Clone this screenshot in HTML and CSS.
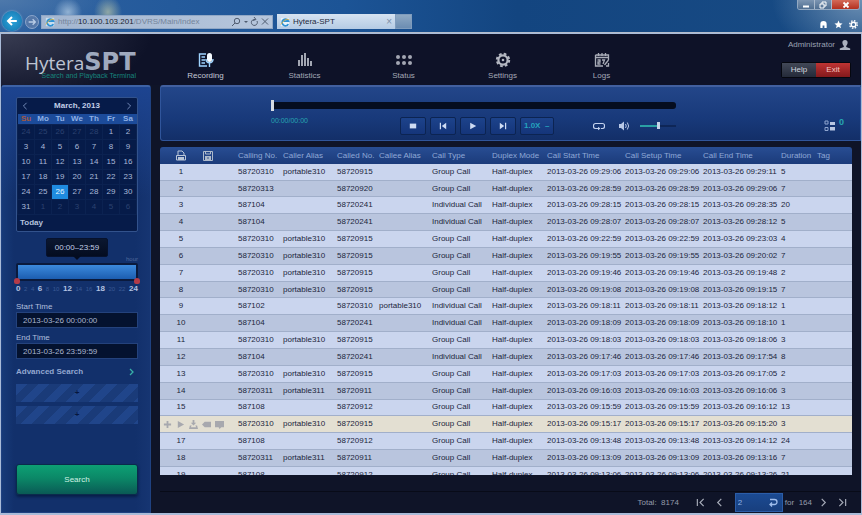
FILE: index.html
```html
<!DOCTYPE html>
<html lang="en">
<head>
<meta charset="utf-8">
<title>Hytera-SPT</title>
<link rel="stylesheet" href="styles.css">
</head>
<body>
<div class="window">
  <div class="chrome">
    <button class="back" aria-label="Back"><svg viewBox="0 0 20 20" width="20" height="20"><path d="M10 5 5 10l5 5M5.500 10H16" fill="none" stroke="#fff" stroke-width="2.500"/></svg></button>
    <button class="forward" aria-label="Forward"><svg viewBox="0 0 12 12" width="10" height="10"><path d="M7 2l4 4-4 4M1 6h9" fill="none" stroke="#b9cde6" stroke-width="2"/></svg></button>
    <div class="address">
      <svg class="ie" viewBox="0 0 12 12"><rect x="1" y="1" width="10" height="10" fill="#c8dff0"/><path d="M10 8.500a4 4 0 1 1 .2-3.500H4" fill="none" stroke="#2f92d4" stroke-width="2"/><path d="M1 9Q6 1 11 3" fill="none" stroke="#e2b33c"/></svg>
      <span class="url">http://<b>10.100.103.201</b>/DVRS/Main/Index</span>
      <svg class="address-tools" viewBox="0 0 38 10" width="38" height="10"><g fill="none" stroke="#4f5c70"><circle cx="6" cy="4" r="2.700"/><path d="M4 6 1 9"/><path d="M24 2.500a3 3 0 1 0 2 1.500M23 0l2 2.500-3 1"/><path d="m31 1.500 6 6M37 1.500l-6 6"/></g><path d="M13 4h4l-2 2z" fill="#4f5c70"/></svg>
    </div>
    <div class="tab">
      <svg class="ie" viewBox="0 0 12 12"><rect x="1" y="1" width="10" height="10" fill="#e8f3fb"/><path d="M10 8.500a4 4 0 1 1 .2-3.500H4" fill="none" stroke="#2f92d4" stroke-width="2"/><path d="M1 9Q6 1 11 3" fill="none" stroke="#e2b33c"/></svg>
      <span>Hytera-SPT</span>
      <button class="tab-close" aria-label="Close tab">×</button>
    </div>
    <button class="tab-new" aria-label="New tab"></button>
    <div class="window-side">
      <div class="window-buttons">
        <button aria-label="Minimize"><svg viewBox="0 0 8 8" width="8" height="8"><path d="M1 5.500h6" stroke="#fff" stroke-width="2"/></svg></button>
        <button aria-label="Restore"><svg viewBox="0 0 8 8" width="8" height="8"><path d="M3 3V1h4v4H5M1 3h4v4H1z" fill="none" stroke="#fff"/></svg></button>
        <button class="window-close" aria-label="Close"><svg viewBox="0 0 8 8" width="8" height="8"><path d="m1.500 1.500 5 5M6.500 1.500l-5 5" stroke="#fff" stroke-width="1.800"/></svg></button>
      </div>
      <div class="window-tools">
        <svg viewBox="0 0 10 10" width="9" height="9"><path d="M1.500 9V4.500a3.500 3.500 0 0 1 7 0V9H6V6H4v3z" fill="#fff"/></svg>
        <svg viewBox="0 0 10 10" width="9" height="9"><path d="m5 .5 1.300 3.100 3.200.2L7 6l.8 3.300L5 7.500 2.200 9.300 3 6 .5 3.800l3.200-.2z" fill="#fff"/></svg>
        <svg viewBox="0 0 10 10" width="9" height="9"><circle cx="5" cy="5" r="2.600" fill="none" stroke="#fff" stroke-width="1.600"/><circle cx="5" cy="5" r="4.200" fill="none" stroke="#fff" stroke-width="1.500" stroke-dasharray="1.700 1.600"/></svg>
      </div>
    </div>
  </div>

  <div class="app">
    <header class="topbar">
      <div class="logo">
        <div class="logo-name"><span>Hytera</span><b>SPT</b></div>
        <div class="logo-sub">Search and Playback Terminal</div>
      </div>
      <nav class="nav">
        <a href="#" class="active"><svg viewBox="0 0 16 16"><g fill="none" stroke="#9fd4ff" stroke-width="1.400"><path d="M8 2H1.500v12H9M3.500 5H7M3.500 8H7M3.500 11H7"/><path d="M8 7c0 5 7 5 7 0M11.500 11v4"/></g><rect x="9" y="1" width="5" height="9" rx="2.500" fill="#f4faff"/></svg>Recording</a>
        <a href="#"><svg viewBox="0 0 16 16"><path d="M1 8h2v6H1zM4 3h2v11H4zM7 1h2v13H7zM10 6h2v8h-2zM13 9h2v5h-2z" fill="#a3a7b3"/></svg>Statistics</a>
        <a href="#"><svg viewBox="0 0 16 16"><g fill="#a3a7b3"><circle cx="2" cy="5" r="2"/><circle cx="8" cy="5" r="2"/><circle cx="14" cy="5" r="2"/><circle cx="2" cy="11" r="2"/><circle cx="8" cy="11" r="2"/><circle cx="14" cy="11" r="2"/></g></svg>Status</a>
        <a href="#"><svg viewBox="0 0 16 16"><circle cx="8" cy="8" r="4.600" fill="none" stroke="#b4b8c2" stroke-width="2.200"/><circle cx="8" cy="8" r="6.200" fill="none" stroke="#b4b8c2" stroke-width="2" stroke-dasharray="2.700 2.170"/><circle cx="8" cy="8" r="1.300" fill="#b4b8c2"/></svg>Settings</a>
        <a href="#"><svg viewBox="0 0 16 16"><g fill="none" stroke="#a9adb8" stroke-width="1.300"><path d="M1.500 3h13v5M1.500 3v11H9M1.500 5.500h13M4.500 1v3M8 1v3M11.500 1v3M14.500 11v3H12"/><path d="M3.500 8H6v2H4v2h2.500M8 8h2.500L9 12"/><path d="m14.500 8-4 5"/></g></svg>Logs</a>
      </nav>
      <div class="account">
        <div class="user">Administrator <svg viewBox="0 0 12 12" width="12" height="12"><path d="M6 1c2 0 2.800 1.400 2.600 3C8.400 5.600 7.500 6.500 7.200 7v1l4 1.500V11H.8V9.500l4-1.500V7C4.500 6.500 3.600 5.600 3.400 4 3.200 2.400 4 1 6 1z" fill="#aab0be"/></svg></div>
        <div class="account-buttons"><button class="help">Help</button><button class="exit">Exit</button></div>
      </div>
    </header>

    <div class="body">
      <aside class="sidebar">
        <div class="calendar">
          <div class="cal-head"><button aria-label="Previous month"><svg viewBox="0 0 6 10" width="6" height="8"><path d="M5 1 1 5l4 4" fill="none" stroke="#8ea6d4"/></svg></button><b>March, 2013</b><button aria-label="Next month"><svg viewBox="0 0 6 10" width="6" height="8"><path d="m1 1 4 4-4 4" fill="none" stroke="#8ea6d4"/></svg></button></div>
          <table class="days">
            <thead><tr><th class="sunday">Su</th><th>Mo</th><th>Tu</th><th>We</th><th>Th</th><th>Fr</th><th>Sa</th></tr></thead>
            <tbody>
              <tr><td class="off">24</td><td class="off">25</td><td class="off">26</td><td class="off">27</td><td class="off">28</td><td>1</td><td>2</td></tr>
              <tr><td>3</td><td>4</td><td>5</td><td>6</td><td>7</td><td>8</td><td>9</td></tr>
              <tr><td>10</td><td>11</td><td>12</td><td>13</td><td>14</td><td>15</td><td>16</td></tr>
              <tr><td>17</td><td>18</td><td>19</td><td>20</td><td>21</td><td>22</td><td>23</td></tr>
              <tr><td>24</td><td>25</td><td class="selected">26</td><td>27</td><td>28</td><td>29</td><td>30</td></tr>
              <tr><td>31</td><td class="off">1</td><td class="off">2</td><td class="off">3</td><td class="off">4</td><td class="off">5</td><td class="off">6</td></tr>
            </tbody>
          </table>
          <button class="today">Today</button>
        </div>
        <div class="range-tip">00:00–23:59</div>
        <div class="range-unit">hour</div>
        <div class="range-bar">
          <input type="range" min="0" max="24" value="0" aria-label="From hour">
          <input type="range" min="0" max="24" value="24" aria-label="To hour">
        </div>
        <div class="hours"><b>0</b><i>2</i><i>4</i><b>6</b><i>8</i><i>10</i><b>12</b><i>14</i><i>16</i><b>18</b><i>20</i><i>22</i><b>24</b></div>
        <label class="field">Start Time<input type="text" value="2013-03-26 00:00:00"></label>
        <label class="field">End Time<input type="text" value="2013-03-26 23:59:59"></label>
        <button class="advanced"><span>Advanced Search</span><svg viewBox="0 0 6 8" width="6" height="8"><path d="m1 1 3 3-3 3" fill="none" stroke="#38b0a8" stroke-width="1.300"/></svg></button>
        <button class="slot" aria-label="Add condition">+</button>
        <button class="slot" aria-label="Add condition">+</button>
        <button class="search">Search</button>
      </aside>

      <main class="main">
        <section class="player">
          <input class="seek" type="range" min="0" max="100" value="0" aria-label="Playback position">
          <div class="controls">
            <span class="elapsed">00:00/00:00</span>
            <div class="buttons">
              <button aria-label="Stop"><svg viewBox="0 0 10 10" width="8" height="8"><path d="M1 2h8v6H1z" fill="#cfdcf3"/></svg></button>
              <button aria-label="Previous"><svg viewBox="0 0 10 10" width="8" height="8"><path d="M1 1h1.500v8H1zM9 1v8L3.500 5z" fill="#cfdcf3"/></svg></button>
              <button aria-label="Play"><svg viewBox="0 0 10 10" width="8" height="8"><path d="M1.500 1 9 5l-7.500 4z" fill="#cfdcf3"/></svg></button>
              <button aria-label="Next"><svg viewBox="0 0 10 10" width="8" height="8"><path d="M7.500 1H9v8H7.500zM1 1v8l5.500-4z" fill="#cfdcf3"/></svg></button>
              <select aria-label="Speed"><option>1.0X &nbsp;–</option></select>
            </div>
            <button class="plain loop" aria-label="Repeat"><svg viewBox="0 0 12 10" width="12" height="10"><path d="M4 2.500H2.500a2 2 0 0 0-2 2v1a2 2 0 0 0 2 2H5M8 7.500h1.500a2 2 0 0 0 2-2v-1a2 2 0 0 0-2-2H4" fill="none" stroke="#c3d2ee" stroke-width="1.200"/><path d="M5 5.700v3.600L7.500 7.500z" fill="#c3d2ee"/></svg></button>
            <button class="plain" aria-label="Mute"><svg viewBox="0 0 12 10" width="12" height="10"><path d="M1 3h2l3-2.500v9L3 7H1z" fill="#b7c7e6"/><path d="M7.500 3q1.500 2 0 4M9.300 1.500q2.700 3.500 0 7" fill="none" stroke="#b7c7e6"/></svg></button>
            <input class="volume" type="range" min="0" max="100" value="50" aria-label="Volume">
            <button class="plain queue" aria-label="Play list"><svg viewBox="0 0 12 12" width="12" height="12"><path d="M1 1h3v3H1zM1 7.500h3v3H1z" fill="none" stroke="#8fa5cf"/><path d="M6 2h5v3H6zM6 7h5v3.500H6z" fill="#b8c6e2"/></svg><sup>0</sup></button>
          </div>
        </section>

        <div class="grid">
          <table class="calls">
            <colgroup><col class="c-no"><col class="c-mark"><col class="c-calling"><col class="c-caller"><col class="c-called"><col class="c-callee"><col class="c-type"><col class="c-mode"><col class="c-time"><col class="c-time"><col class="c-time"><col class="c-dur"><col></colgroup>
            <thead><tr>
              <th><svg viewBox="0 0 12 12"><path d="M3 5V1h4l2 2v2M1.500 5.500h9V10h-9z" fill="none" stroke="#bac6d8"/><path d="M3 7h6v3H3z" fill="#bac6d8"/></svg></th>
              <th class="icon-left"><svg viewBox="0 0 12 12"><path d="M1.500 1.500h9v9h-9zM3.500 1v3h5V1" fill="none" stroke="#aebacb"/><path d="M3 6h6v4H3z" fill="#aebacb"/><path d="M5 8h2" stroke="#39598f"/></svg></th>
              <th>Calling No.</th><th>Caller Alias</th><th>Called No.</th><th>Callee Alias</th><th>Call Type</th><th>Duplex Mode</th><th>Call Start Time</th><th>Call Setup Time</th><th>Call End Time</th><th>Duration</th><th>Tag</th>
            </tr></thead>
            <tbody id="calls"></tbody>
          </table>
        </div>

        <footer class="pager">
          <span class="total">Total: &nbsp;8174</span>
          <button aria-label="First page"><svg viewBox="0 0 10 10" width="9" height="9"><path d="M1.500 1v8M8.500 1l-4 4 4 4" fill="none" stroke="#a7acb9" stroke-width="1.300"/></svg></button>
          <button aria-label="Previous page"><svg viewBox="0 0 10 10" width="9" height="9"><path d="M7 1 3 5l4 4" fill="none" stroke="#a7acb9" stroke-width="1.300"/></svg></button>
          <div class="page-box"><input type="text" value="2" aria-label="Page"><button aria-label="Go to page"><svg viewBox="0 0 10 10" width="10" height="10"><path d="M2 1.500h4.500a2.500 2.500 0 0 1 0 5H2M4 4.500l-2 2 2 2" fill="none" stroke="#9fbdec" stroke-width="1.300"/></svg></button></div>
          <span class="pages">for &nbsp;164</span>
          <button aria-label="Next page"><svg viewBox="0 0 10 10" width="9" height="9"><path d="m3 1 4 4-4 4" fill="none" stroke="#a7acb9" stroke-width="1.300"/></svg></button>
          <button aria-label="Last page"><svg viewBox="0 0 10 10" width="9" height="9"><path d="M8.500 1v8M1.500 1l4 4-4 4" fill="none" stroke="#a7acb9" stroke-width="1.300"/></svg></button>
        </footer>
      </main>
    </div>
  </div>
</div>
<script src="app.js"></script>
</body>
</html>
```
FILE: styles.css
```css
* { box-sizing: border-box; }
body { margin: 0; font: 8px/10px "Liberation Sans", Arial, sans-serif; color: #b7c1d8; }
button, input, select { font: inherit; color: inherit; margin: 0; padding: 0; border: 0; background: none; appearance: none; border-radius: 0; }
button { display: flex; align-items: center; justify-content: center; }
svg { display: block; flex: none; }
a { color: inherit; text-decoration: none; }

.window { display: flex; flex-direction: column; height: 100vh; background: #a9bbd8; }

/* Browser frame */
.chrome { display: flex; align-items: flex-end; flex: none; height: 33px; padding: 0 0 3px 2px; border-bottom: 1px solid #b3bccb;
  background:
    radial-gradient(ellipse 14px 14px at 68px 12px, #a8c4dfcc, transparent),
    radial-gradient(ellipse 14px 16px at 108px 12px, #a8b9a8cc, transparent),
    radial-gradient(ellipse 120px 34px at 0 0, #567faecc, transparent),
    radial-gradient(ellipse 90px 60px at 100% 0, #6d90b4, transparent),
    linear-gradient(90deg, #2c60a0, #1c5496 40%, #134580 60%, #184b84); }
.back { width: 20px; height: 20px; border-radius: 50%; background: radial-gradient(#2ba5dc, #1572ac); box-shadow: 0 0 2px #9ad2f0; margin-bottom: -2px; }
.back svg { width: 16px; height: 16px; }
.forward { width: 14px; height: 14px; margin: 0 2px 0 3px; border: 1px solid #8aa5cb; border-radius: 50%; background: #5578a9; }
.forward svg { width: 8px; height: 8px; }
.address { display: flex; align-items: center; gap: 3px; width: 232px; height: 14px; padding: 0 3px; margin-right: 4px; color: #74849a; background: linear-gradient(90deg, #a3b6d0, #b6c6dc); border: 1px solid #91a8c6; }
.address b { font-weight: normal; color: #1b2430; }
.ie { width: 10px; height: 10px; }
.address-tools { margin-left: auto; }
.tab { display: flex; align-items: center; gap: 3px; width: 118px; height: 15px; padding: 0 3px; color: #1d2a3c; background: linear-gradient(#d6e3f1, #b5cbe4); }
.tab-close { margin-left: auto; color: #7d8fa8; font-size: 10px; }
.tab-new { width: 17px; height: 15px; background: linear-gradient(#8fa9c4, #6c8db2); border: 1px solid #7f9cbd; }
.window-side { display: flex; flex-direction: column; justify-content: space-between; align-items: flex-end; align-self: stretch; margin-left: auto; }
.window-buttons { display: flex; margin-right: 2px; border: 1px solid #93a9c2; border-top: 0; border-radius: 0 0 3px 3px; overflow: hidden; }
.window-buttons button { width: 17px; height: 9px; border-right: 1px solid #a9b9cc; background: linear-gradient(#7c95b2, #506f92); }
.window-buttons .window-close { width: 27px; border: 0; background: linear-gradient(#d46a58, #b3301f); }
.window-tools { display: flex; gap: 6px; margin: 0 4px 0 0; }

/* Application */
.app { display: flex; flex-direction: column; flex: 1; min-height: 0; margin: 1px 1px 2px; background: #0f1428; }
.topbar { display: flex; flex: none; height: 51px; background: radial-gradient(ellipse 150px 70px at 0 0, #383c52, transparent), #0e1228; }
.logo { width: 155px; padding: 17px 0 0 24px; }
.logo-name { display: flex; align-items: baseline; height: 21px; font: 20px/22px "Open Sans", "Noto Sans", sans-serif; color: #bdc3d2; }
.logo-name span { font-size: 19px; }
.logo-name b { font: bold 24px/22px "DejaVu Sans", sans-serif; color: #9fa9be; }
.logo-sub { text-align: right; padding-right: 20px; line-height: 8px; font-size: 7px; color: #17857c; }
.nav { display: flex; }
.nav a { display: flex; flex-direction: column; align-items: center; gap: 3px; width: 99px; padding-top: 18px; color: #a3a8b6; }
.nav svg { width: 16px; height: 16px; }
.nav .active { color: #c3c8d6; }
.account { display: flex; flex-direction: column; align-items: flex-end; gap: 11px; margin-left: auto; padding: 5px 10px 0 0; }
.user { display: flex; align-items: center; gap: 4px; color: #9aa1b3; }
.account-buttons { display: flex; border: 1px solid #05070f; border-radius: 2px; }
.account-buttons button { width: 34px; height: 14px; color: #d2d6de; background: linear-gradient(#424857, #242a39); }
.account-buttons .exit { color: #f5c9c2; background: linear-gradient(#bf3433, #83191c); }

.body { display: flex; flex: 1; min-height: 0; gap: 9px; }
.sidebar { display: flex; flex-direction: column; flex: none; width: 150px; padding: 10px 12px 17px 14px; border: 1px solid #1f4180; border-top: 2px solid #3d62a5; border-radius: 3px 3px 0 0; background: linear-gradient(#1d4490, #17397900 110px), linear-gradient(90deg, #173a78, #12306b 12px, #12306b 90%, #163572); }
.calendar { flex: none; border: 1px solid #32528c; border-radius: 2px; background: #061b49; height: 135px; }
.cal-head { display: flex; justify-content: space-between; align-items: center; height: 16px; padding: 0 5px; color: #c2cfe8; }
.days { width: 100%; table-layout: fixed; border-collapse: collapse; text-align: center; }
.days th { height: 10px; padding: 0; color: #8fb0e4; background: #1c4b9a; }
.days .sunday { color: #a4583f; }
.days td { height: 15px; padding: 0; color: #a9b9d8; border: 1px solid #0b2251; }
.days .off { color: #2b4270; }
.days .selected { color: #e5f5ff; background: #1f8be0; }
.today { height: 16px; padding-left: 3px; font-weight: bold; color: #b4c2dd; }
.range-tip { position: relative; flex: none; align-self: center; width: 62px; margin-top: 6px; line-height: 17px; text-align: center; color: #c2cfe6; background: linear-gradient(#0b1730, #040c20); border: 1px solid #07122d; border-radius: 2px; }
.range-tip::after { content: ""; position: absolute; left: 50%; top: 100%; margin-left: -4px; border: 4px solid transparent; border-top-color: #040c20; border-bottom: 0; }
.range-unit { flex: none; height: 6px; line-height: 4px; font-size: 6px; text-align: right; color: #50699b; }
.range-bar { position: relative; flex: none; height: 18px; border: 2px solid #0a1a3d; border-radius: 2px; background: linear-gradient(#3c8add, #1c5db0); }
.range-bar input { position: absolute; left: -4px; top: 13px; width: calc(100% + 8px); height: 6px; pointer-events: none; }
.range-bar input::-webkit-slider-thumb { appearance: none; width: 6px; height: 6px; border-radius: 3px 3px 2px 2px; background: #b23b48; pointer-events: auto; }
.hours { display: flex; justify-content: space-between; flex: none; margin-top: 3px; }
.hours b { color: #b3c3e2; }
.hours i { font-style: normal; font-size: 6px; color: #3a5994; }
.field { display: flex; flex-direction: column; flex: none; margin-top: 5px; color: #b0bfdc; }
.hours + .field { margin-top: 8px; }
.field input { width: 100%; height: 16px; padding: 0 6px; color: #a9b6d0; background: #04122f; border: 1px solid #24427c; }
.advanced { flex: none; justify-content: space-between; height: 14px; margin: 6px 3px 5px 0; font-weight: bold; color: #93a7d0; }
.slot { flex: none; height: 18px; margin-bottom: 4px; font-weight: bold; color: #06173d; background: repeating-linear-gradient(135deg, #20458a 0 8px, #1a3b79 8px 16px); }
.search { flex: none; height: 31px; margin-top: auto; border: 1px solid #0a2b4b; border-radius: 3px; color: #d0f2e4; background: linear-gradient(#0da074, #0b8867 45%, #0a5a55); box-shadow: 0 2px 3px #081e48; }

.main { display: flex; flex-direction: column; flex: 1; min-width: 0; }
.player { flex: none; height: 56px; padding: 12px 16px 0 110px; border: 1px solid #30559b; border-top: 2px solid #42609f; border-radius: 3px 0 0 3px; background: linear-gradient(#234689, #18397a 60%, #132f68); }
.seek { display: block; width: 405px; max-width: 100%; height: 12px; }
.seek::-webkit-slider-runnable-track { height: 7px; border-radius: 3px; background: #050d1f; }
.seek::-webkit-slider-thumb { appearance: none; width: 3px; height: 11px; margin-top: -2px; background: #d6dbe2; }
.controls { display: flex; align-items: center; height: 18px; margin-top: 6px; }
.elapsed { width: 129px; align-self: flex-start; line-height: 8px; font-size: 7px; color: #26a5b0; }
.buttons { display: flex; gap: 4px; }
.buttons button, .buttons select { width: 26px; height: 18px; border: 1px solid #0c2452; border-radius: 2px; background: linear-gradient(#1d438b, #15357a); }
.buttons select { width: 34px; padding-left: 3px; font-weight: bold; color: #25a3bd; }
.plain { width: 12px; margin-left: 13px; }
.plain.loop { margin-left: 39px; }
.volume { width: 36px; height: 10px; margin-left: 10px; }
.volume::-webkit-slider-runnable-track { height: 2px; background: linear-gradient(90deg, #2aa0a4 50%, #0e2657 50%); }
.volume::-webkit-slider-thumb { appearance: none; width: 3px; height: 7px; margin-top: -3px; background: #c5d3e8; }
.queue { width: auto; margin-left: auto; gap: 3px; }
.queue sup { align-self: flex-start; line-height: 4px; font-size: 9px; font-weight: bold; color: #26a5b0; }

.grid { flex: 1; min-height: 0; margin: 6px 9px 0 0; overflow: hidden; border-radius: 3px 3px 0 0; }
.calls { width: 100%; height: 337px; table-layout: fixed; border-collapse: collapse; white-space: nowrap; }
.calls th { height: 17px; padding: 0 0 0 4px; font-weight: normal; text-align: left; color: #8fa8d6; background: linear-gradient(#284d93, #1b3b7a); }
.calls th:first-child { padding: 0; }
.calls th svg { width: 12px; height: 12px; margin: 0 auto; }
.calls .icon-left { padding: 0; }
.calls .icon-left svg { margin: 0; }
.calls td { padding: 0 0 0 4px; color: #1b253c; border-bottom: 1px solid #a1afca; background: #cad5ee; }
.calls tr:nth-child(even) td { background: #b9c5de; }
.calls td:first-child { padding: 0; text-align: center; }
.calls tr.hover td { background: #e3dfd2; }
.row-tools { display: flex; gap: 4px; padding-left: 3px; }
.row-tools button, .row-tools svg { width: 9px; height: 9px; }
.row-tools svg { fill: #a7a8ae; }
.c-no { width: 42px; } .c-mark { width: 32px; } .c-calling { width: 45px; } .c-caller { width: 54px; } .c-called { width: 42px; } .c-callee { width: 53px; }
.c-type { width: 60px; } .c-mode { width: 55px; } .c-time { width: 78px; } .c-dur { width: 36px; }

.pager { display: flex; align-items: center; justify-content: flex-end; flex: none; height: 22px; margin-top: 16px; padding-right: 9px; border-top: 1px solid #080b18; color: #959baa; }
.pager > button { width: 19px; height: 16px; }
.total { margin-right: 12px; }
.page-box { display: flex; width: 48px; height: 19px; margin: 0 2px 0 6px; padding: 0 4px 0 2px; border: 1px solid #2b5da8; background: linear-gradient(#1b4a92, #183f7e); }
.page-box input { flex: 1; min-width: 0; color: #8fb2e4; }
.pages { margin-right: 2px; }
```
FILE: app.js
```js
// number, calling no., caller alias, called no., callee alias, type, start, end, duration
const calls = [
  [1, "58720310", "portable310", "58720915", "", "Group", "09:29:06", "09:29:11", 5],
  [2, "58720313", "", "58720920", "", "Group", "09:28:59", "09:29:06", 7],
  [3, "587104", "", "58720241", "", "Individual", "09:28:15", "09:28:35", 20],
  [4, "587104", "", "58720241", "", "Individual", "09:28:07", "09:28:12", 5],
  [5, "58720310", "portable310", "58720915", "", "Group", "09:22:59", "09:23:03", 4],
  [6, "58720310", "portable310", "58720915", "", "Group", "09:19:55", "09:20:02", 7],
  [7, "58720310", "portable310", "58720915", "", "Group", "09:19:46", "09:19:48", 2],
  [8, "58720310", "portable310", "58720915", "", "Group", "09:19:08", "09:19:15", 7],
  [9, "587102", "", "58720310", "portable310", "Individual", "09:18:11", "09:18:12", 1],
  [10, "587104", "", "58720241", "", "Individual", "09:18:09", "09:18:10", 1],
  [11, "58720310", "portable310", "58720915", "", "Group", "09:18:03", "09:18:06", 3],
  [12, "587104", "", "58720241", "", "Individual", "09:17:46", "09:17:54", 8],
  [13, "58720310", "portable310", "58720915", "", "Group", "09:17:03", "09:17:05", 2],
  [14, "58720311", "portable311", "58720911", "", "Group", "09:16:03", "09:16:06", 3],
  [15, "587108", "", "58720912", "", "Group", "09:15:59", "09:16:12", 13],
  [16, "58720310", "portable310", "58720915", "", "Group", "09:15:17", "09:15:20", 3],
  [17, "587108", "", "58720912", "", "Group", "09:13:48", "09:14:12", 24],
  [18, "58720311", "portable311", "58720911", "", "Group", "09:13:09", "09:13:16", 7],
  [19, "587108", "", "58720912", "", "Group", "09:13:06", "09:13:26", 21]
];
const hovered = 16;
const tools = [
  ["Add", "M4 1h2v3h3v2H6v3H4V6H1V4h3z"],
  ["Play", "M2 1l7 4-7 4z"],
  ["Download", "M4 0h2v3h2L5 6 2 3h2zM1 6l2 0-1 2h6L7 6h2l1 4H0z"],
  ["Tag", "M0 5l3-3h7v6H3z"],
  ["Comment", "M0 1h10v7H7L5 10 4 8H0z"]
];
const toolbar = '<td colspan="2"><div class="row-tools">' + tools.map(([name, d]) =>
  `<button aria-label="${name}"><svg viewBox="0 0 10 10"><path d="${d}"/></svg></button>`).join("") + "</div></td>";
const day = "2013-03-26 ";
document.getElementById("calls").innerHTML = calls.map(([n, calling, caller, called, callee, type, start, end, dur]) => {
  const cells = [calling, caller, called, callee, type + " Call", "Half-duplex", day + start, day + start, day + end, dur, ""];
  const lead = n === hovered ? toolbar : `<td>${n}</td><td></td>`;
  return `<tr${n === hovered ? ' class="hover"' : ""}>${lead}${cells.map(c => `<td>${c}</td>`).join("")}</tr>`;
}).join("");
```
